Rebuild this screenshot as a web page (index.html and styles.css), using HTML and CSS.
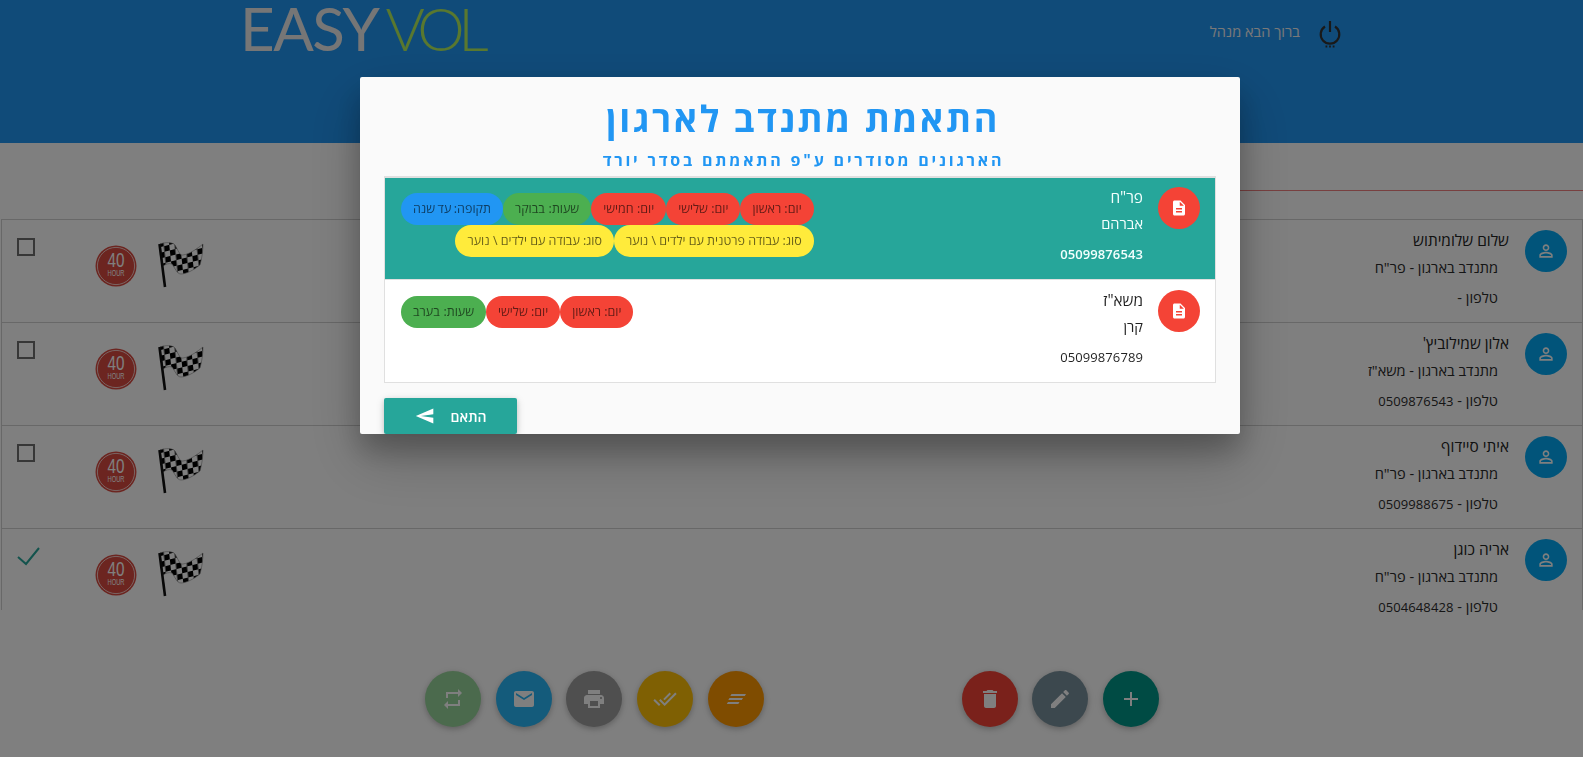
FILE: index.html
```html
<!DOCTYPE html>
<html lang="he" dir="rtl">
<head>
<meta charset="utf-8">
<title>EasyVol</title>
<link rel="stylesheet" href="styles.css">
</head>
<body>
<svg class="defs" width="0" height="0" aria-hidden="true">
  <defs>
    <pattern id="checks" width="11" height="11" patternUnits="userSpaceOnUse" patternTransform="rotate(-14) skewX(-8)">
      <rect width="11" height="11" fill="#fff"/>
      <rect width="5.5" height="5.5" fill="#000"/>
      <rect x="5.5" y="5.5" width="5.5" height="5.5" fill="#000"/>
    </pattern>
    <symbol id="flag" viewBox="0 0 46 46">
      <path class="flag-cloth" d="M2 2C8 0 14 0 17 3C20 8 22 14 25 13C32 12 40 6 45 2C45 8 44 16 42 23C36 28 28 32 23 32C19 32 17 26 14 22C11 21 8 22 5 24Z"/>
      <path class="flag-pole" d="M1.5 2L7 45"/>
    </symbol>
    <symbol id="badge" viewBox="0 0 42 42">
      <circle class="badge-disc" cx="21" cy="21" r="20.5"/>
      <circle class="badge-ring" cx="21" cy="21" r="18.6"/>
      <text class="badge-num" x="21" y="22" text-anchor="middle" textLength="17" lengthAdjust="spacingAndGlyphs">40</text>
      <text class="badge-unit" x="21" y="31" text-anchor="middle" textLength="17" lengthAdjust="spacingAndGlyphs">HOUR</text>
    </symbol>
    <symbol id="person" viewBox="0 0 24 24"><path d="M12 5.9c1.16 0 2.1.94 2.1 2.1s-.94 2.1-2.1 2.1S9.9 9.16 9.9 8s.94-2.1 2.1-2.1m0 9c2.97 0 6.1 1.46 6.1 2.1v1.1H5.9V17c0-.64 3.13-2.1 6.1-2.1M12 4C9.79 4 8 5.79 8 8s1.79 4 4 4 4-1.79 4-4-1.79-4-4-4zm0 9c-2.67 0-8 1.34-8 4v3h16v-3c0-2.66-5.33-4-8-4z"/></symbol>
    <symbol id="doc" viewBox="0 0 24 24"><path d="M14 2H6c-1.1 0-1.99.9-1.99 2L4 20c0 1.1.89 2 1.99 2H18c1.1 0 2-.9 2-2V8l-6-6zm2 16H8v-2h8v2zm0-4H8v-2h8v2zm-3-5V3.5L18.5 9H13z"/></symbol>
  </defs>
</svg>

<header class="topbar">
  <div class="logo" dir="ltr"><span class="logo-easy">EASY</span><span class="logo-vol">VOL</span></div>
  <div class="user" dir="rtl">
    <svg class="power" viewBox="0 0 22 28" aria-hidden="true">
      <path class="power-arc" d="M6 6.5a9.3 9.3 0 1 0 10 0"/>
      <path class="power-bar" d="M11 1v11"/>
      <path class="power-dots" d="M6.5 26.5h1.8M10.1 26.5h1.8M13.7 26.5h1.8"/>
    </svg>
    <span class="welcome">ברוך הבא מנהל</span>
  </div>
</header>

<div class="tabline"></div>

<main class="people">
  <section class="person-row">
    <span class="person-avatar"><svg class="person-icon"><use href="#person"/></svg></span>
    <div class="person-text">
      <div class="person-name">שלום שלומיתוש</div>
      <div class="person-sub">מתנדב בארגון - פר"ח</div>
      <div class="person-sub">טלפון -</div>
    </div>
    <div class="person-marks">
      <svg class="mark-flag"><use href="#flag"/></svg>
      <svg class="mark-badge"><use href="#badge"/></svg>
      <span class="mark-cell"><span class="checkbox"></span></span>
    </div>
  </section>
  <section class="person-row">
    <span class="person-avatar"><svg class="person-icon"><use href="#person"/></svg></span>
    <div class="person-text">
      <div class="person-name">אלון שמילוביץ'</div>
      <div class="person-sub">מתנדב בארגון - משא"ז</div>
      <div class="person-sub">טלפון - <span class="num">0509876543</span></div>
    </div>
    <div class="person-marks">
      <svg class="mark-flag"><use href="#flag"/></svg>
      <svg class="mark-badge"><use href="#badge"/></svg>
      <span class="mark-cell"><span class="checkbox"></span></span>
    </div>
  </section>
  <section class="person-row">
    <span class="person-avatar"><svg class="person-icon"><use href="#person"/></svg></span>
    <div class="person-text">
      <div class="person-name">איתי סיידוף</div>
      <div class="person-sub">מתנדב בארגון - פר"ח</div>
      <div class="person-sub">טלפון - <span class="num">0509988675</span></div>
    </div>
    <div class="person-marks">
      <svg class="mark-flag"><use href="#flag"/></svg>
      <svg class="mark-badge"><use href="#badge"/></svg>
      <span class="mark-cell"><span class="checkbox"></span></span>
    </div>
  </section>
  <section class="person-row person-row-cut">
    <span class="person-avatar"><svg class="person-icon"><use href="#person"/></svg></span>
    <div class="person-text">
      <div class="person-name">אריה כוגן</div>
      <div class="person-sub">מתנדב בארגון - פר"ח</div>
      <div class="person-sub">טלפון - <span class="num">0504648428</span></div>
    </div>
    <div class="person-marks">
      <svg class="mark-flag"><use href="#flag"/></svg>
      <svg class="mark-badge"><use href="#badge"/></svg>
      <span class="mark-cell"><svg class="checkmark" viewBox="0 0 24 20"><path d="M1 10l8 7L22 1"/></svg></span>
    </div>
  </section>
</main>

<footer class="actions">
  <div class="fab-group">
    <button class="fab fab-teal"><svg viewBox="0 0 24 24"><path d="M19 13h-6v6h-2v-6H5v-2h6V5h2v6h6v2z"/></svg></button>
    <button class="fab fab-slate"><svg viewBox="0 0 24 24"><path d="M3 17.25V21h3.75L17.81 9.94l-3.75-3.75L3 17.25zM20.71 7.04c.39-.39.39-1.02 0-1.41l-2.34-2.34c-.39-.39-1.02-.39-1.41 0l-1.83 1.83 3.75 3.75 1.83-1.83z"/></svg></button>
    <button class="fab fab-red"><svg viewBox="0 0 24 24"><path d="M6 19c0 1.1.9 2 2 2h8c1.1 0 2-.9 2-2V7H6v12zM19 4h-3.5l-1-1h-5l-1 1H5v2h14V4z"/></svg></button>
  </div>
  <div class="fab-group">
    <button class="fab fab-orange"><svg viewBox="0 0 24 24"><path d="M7.5 7H22l-1.2 2H6.3zM5.5 11H19l-1.2 2H4.3zM4 15h11.5l-1.2 2H2.8z"/></svg></button>
    <button class="fab fab-amber"><svg viewBox="0 0 24 24"><path d="M18 7l-1.41-1.41-6.34 6.34 1.41 1.41L18 7zm4.24-1.41L11.66 16.17 7.48 12l-1.41 1.41L11.66 19l12-12-1.42-1.41zM.41 13.41L6 19l1.41-1.41L1.83 12 .41 13.41z"/></svg></button>
    <button class="fab fab-grey"><svg viewBox="0 0 24 24"><path d="M19 8H5c-1.66 0-3 1.34-3 3v6h4v4h12v-4h4v-6c0-1.66-1.34-3-3-3zm-3 11H8v-5h8v5zm3-7c-.55 0-1-.45-1-1s.45-1 1-1 1 .45 1 1-.45 1-1 1zm-1-9H6v4h12V3z"/></svg></button>
    <button class="fab fab-blue"><svg viewBox="0 0 24 24"><path d="M20 4H4c-1.1 0-1.99.9-1.99 2L2 18c0 1.1.9 2 2 2h16c1.1 0 2-.9 2-2V6c0-1.1-.9-2-2-2zm0 4l-8 5-8-5V6l8 5 8-5v2z"/></svg></button>
    <button class="fab fab-green"><svg viewBox="0 0 24 24"><path d="M7 7h10v3l4-4-4-4v3H5v6h2V7zm10 10H7v-3l-4 4 4 4v-3h12v-6h-2v4z"/></svg></button>
  </div>
</footer>

<div class="overlay"></div>

<div class="modal">
  <h1 class="modal-title">התאמת מתנדב לארגון</h1>
  <h2 class="modal-subtitle">הארגונים מסודרים ע"פ התאמתם בסדר יורד</h2>
  <div class="org-list">
    <div class="org-row org-row-active">
      <span class="org-avatar"><svg class="org-icon"><use href="#doc"/></svg></span>
      <div class="org-text">
        <div class="org-name">פר"ח</div>
        <div class="org-sub">אברהם</div>
        <div class="org-sub"><span class="num">05099876543</span></div>
      </div>
      <div class="chips">
        <div class="chip-line">
          <span class="chip chip-red">יום: ראשון</span>
          <span class="chip chip-red">יום: שלישי</span>
          <span class="chip chip-red">יום: חמישי</span>
          <span class="chip chip-green">שעות: בבוקר</span>
          <span class="chip chip-blue">תקופה: עד שנה</span>
        </div>
        <div class="chip-line">
          <span class="chip chip-yellow">סוג: עבודה פרטנית עם ילדים \ נוער</span>
          <span class="chip chip-yellow">סוג: עבודה עם ילדים \ נוער</span>
        </div>
      </div>
    </div>
    <div class="org-row">
      <span class="org-avatar"><svg class="org-icon"><use href="#doc"/></svg></span>
      <div class="org-text">
        <div class="org-name">משא"ז</div>
        <div class="org-sub">קרן</div>
        <div class="org-sub"><span class="num">05099876789</span></div>
      </div>
      <div class="chips">
        <div class="chip-line">
          <span class="chip chip-red">יום: ראשון</span>
          <span class="chip chip-red">יום: שלישי</span>
          <span class="chip chip-green">שעות: בערב</span>
        </div>
      </div>
    </div>
  </div>
  <div class="modal-foot">
    <button class="match-btn">התאם<svg class="send-icon" viewBox="0 0 24 24"><path d="M2.01 21L23 12 2.01 3 2 10l15 2-15 2z"/></svg></button>
  </div>
</div>
</body>
</html>
```

FILE: styles.css
```css
* { box-sizing: border-box; }
html, body { height: 100%; }
body {
  margin: 0;
  height: 757px;
  overflow: hidden;
  background: #fff;
  color: rgba(0,0,0,.87);
  font-family: "Open Sans", "Noto Sans", sans-serif;
  font-size: 14px;
}
.defs { display: block; height: 0; }
.num { font-size: 13px; letter-spacing: .1px; }

/* header */
.topbar {
  height: 143px;
  background: #2196f3;
  display: flex;
  flex-direction: row-reverse;
  justify-content: space-between;
  align-items: flex-start;
  padding: 0 242px 0 240px;
}
.logo {
  font-family: "Lato", "Liberation Sans", sans-serif;
  font-weight: 400;
  font-size: 60px;
  line-height: 56px;
  white-space: nowrap;
  display: flex;
}
.logo-easy { color: #ececec; letter-spacing: -1.5px; }
.logo-vol { color: #b2f05e; margin-left: 7px; letter-spacing: -6.5px; font-weight: 300; }
.user { display: flex; align-items: center; gap: 19px; margin-top: 20px; }
.welcome { color: #f2f2f2; font-size: 14.6px; line-height: 22px; margin-top: -7px; }
.power { width: 22px; height: 28px; display: block; fill: none; }
.power-arc, .power-bar { stroke: #333; stroke-width: 2.2; stroke-linecap: butt; }
.power-dots { stroke: #333; stroke-width: 2.2; }

.tabline {
  height: 1px;
  width: 50%;
  margin: 47px 0 0 auto;
  background: #f08080;
}

/* list */
.people {
  margin: 28px 0 0 1px;
  height: 391px;
  border: 1px solid #d0d0d0;
  border-bottom: 0;
}
.person-row {
  height: 103px;
  display: flex;
  align-items: flex-start;
  padding: 10px 15px 0 15px;
  border-bottom: 1px solid #d0d0d0;
}
.person-row-cut { height: 81px; border-bottom: 0; }
.person-avatar {
  width: 42px;
  height: 42px;
  border-radius: 50%;
  background: #03a9f4;
  display: flex;
  align-items: center;
  justify-content: center;
  flex: none;
}
.person-icon { width: 20px; height: 20px; fill: #fff; }
.person-text { margin-right: 16px; }
.person-name { font-size: 15.4px; line-height: 22px; color: #222; }
.person-sub { font-size: 14.6px; line-height: 30px; padding-right: 11px; color: #2b2b2b; }
.person-marks { margin-right: auto; display: flex; align-items: flex-start; }
.mark-flag { width: 46px; height: 46px; margin-top: 12px; }
.mark-badge { width: 42px; height: 42px; margin: 15px 21px 0 0; }
.mark-cell { width: 24px; margin: 8px 54px 0 0; display: flex; justify-content: flex-end; }
.checkbox { width: 18px; height: 18px; border: 2px solid #6e6e6e; display: block; }
.checkmark { width: 24px; height: 20px; flex: none; fill: none; stroke: #26a69a; stroke-width: 2; }

.flag-cloth { fill: url(#checks); stroke: #888; stroke-width: .6; }
.flag-pole { stroke: #111; stroke-width: 2.6; fill: none; }
.badge-disc { fill: #d84a40; }
.badge-ring { fill: none; stroke: #fff; stroke-width: .7; }
.badge-num { fill: #fff; font-family: "Liberation Sans", sans-serif; font-size: 21px; }
.badge-unit { fill: #fff; font-family: "Liberation Sans", sans-serif; font-size: 8.5px; }

/* floating buttons */
.actions {
  margin-top: 61px;
  display: flex;
  justify-content: space-between;
  padding: 0 424px 0 425px;
}
.fab-group { display: flex; gap: 14.7px; }
.fab {
  width: 56px;
  height: 56px;
  padding: 0;
  border: 0;
  border-radius: 50%;
  display: flex;
  align-items: center;
  justify-content: center;
  box-shadow: 0 2px 5px rgba(0,0,0,.16), 0 2px 10px rgba(0,0,0,.12);
}
.fab svg { width: 24px; height: 24px; fill: #fff; }
.fab-teal { background: #009688; }
.fab-slate { background: #78909c; }
.fab-red { background: #f44336; }
.fab-orange { background: #ff9800; }
.fab-amber { background: #ffc107; }
.fab-grey { background: #9e9e9e; }
.fab-blue { background: #29b6f6; }
.fab-green { background: #96d49a; }

/* overlay + modal */
.overlay { position: fixed; inset: 0; background: rgba(0,0,0,.5); }
.modal {
  position: fixed;
  left: 360px;
  top: 77px;
  width: 880px;
  height: 357px;
  overflow: hidden;
  padding: 24px;
  background: #fafafa;
  border-radius: 2px;
  box-shadow: 0 16px 28px 0 rgba(0,0,0,.22), 0 25px 55px 0 rgba(0,0,0,.21);
}
.modal-title {
  margin: 0 0 13px;
  padding-left: 6px;
  text-align: center;
  color: #2196f3;
  font-size: 36px;
  line-height: 36px;
  font-weight: 700;
  letter-spacing: 2.6px;
}
.modal-subtitle {
  margin: 0 0 6px;
  padding-left: 7px;
  text-align: center;
  color: #2196f3;
  font-size: 16px;
  line-height: 20px;
  font-weight: 700;
  letter-spacing: 2.8px;
}
.org-list { border: 1px solid #e0e0e0; border-top-width: 2px; background: #fff; }
.org-row {
  height: 102px;
  display: flex;
  align-items: flex-start;
  padding: 10px 15px 0 16px;
  border-bottom: 1px solid #e0e0e0;
  color: rgba(0,0,0,.87);
}
.org-row:last-child { border-bottom: 0; }
.org-row-active { background: #26a69a; color: #f2fffd; padding-top: 9px; }
.org-row-active .num { font-weight: 600; }
.org-avatar {
  width: 42px;
  height: 42px;
  border-radius: 50%;
  background: #f44336;
  display: flex;
  align-items: center;
  justify-content: center;
  flex: none;
}
.org-icon { width: 18px; height: 18px; fill: #fff; }
.org-text { margin-right: 15px; }
.org-name { font-size: 15.4px; line-height: 22px; }
.org-sub { font-size: 14.6px; line-height: 29.5px; }
.chips {
  margin-right: auto;
  margin-top: 6px;
  display: flex;
  flex-direction: column;
  align-items: flex-start;
}
.chip-line { display: flex; }
.chip {
  height: 32px;
  line-height: 32px;
  padding: 0 12px;
  border-radius: 16px;
  font-size: 12.5px;
  color: rgba(0,0,0,.6);
  white-space: nowrap;
}
.chip-red { background: #f44336; }
.chip-green { background: #4caf50; word-spacing: .5px; }
.chip-blue { background: #2196f3; word-spacing: -.7px; }
.chip-yellow { background: #ffeb3b; }
.modal-foot { display: flex; justify-content: flex-end; margin-top: 15px; }
.match-btn {
  width: 133px;
  height: 36px;
  border: 0;
  border-radius: 2px;
  background: #26a69a;
  color: #fff;
  font-family: inherit;
  font-size: 14px;
  font-weight: 600;
  display: flex;
  align-items: center;
  justify-content: center;
  gap: 16px;
  padding: 0;
  box-shadow: 0 2px 5px rgba(0,0,0,.16), 0 2px 10px rgba(0,0,0,.12);
}
.send-icon { width: 20px; height: 20px; fill: #fff; transform: scaleX(-1); }
```
